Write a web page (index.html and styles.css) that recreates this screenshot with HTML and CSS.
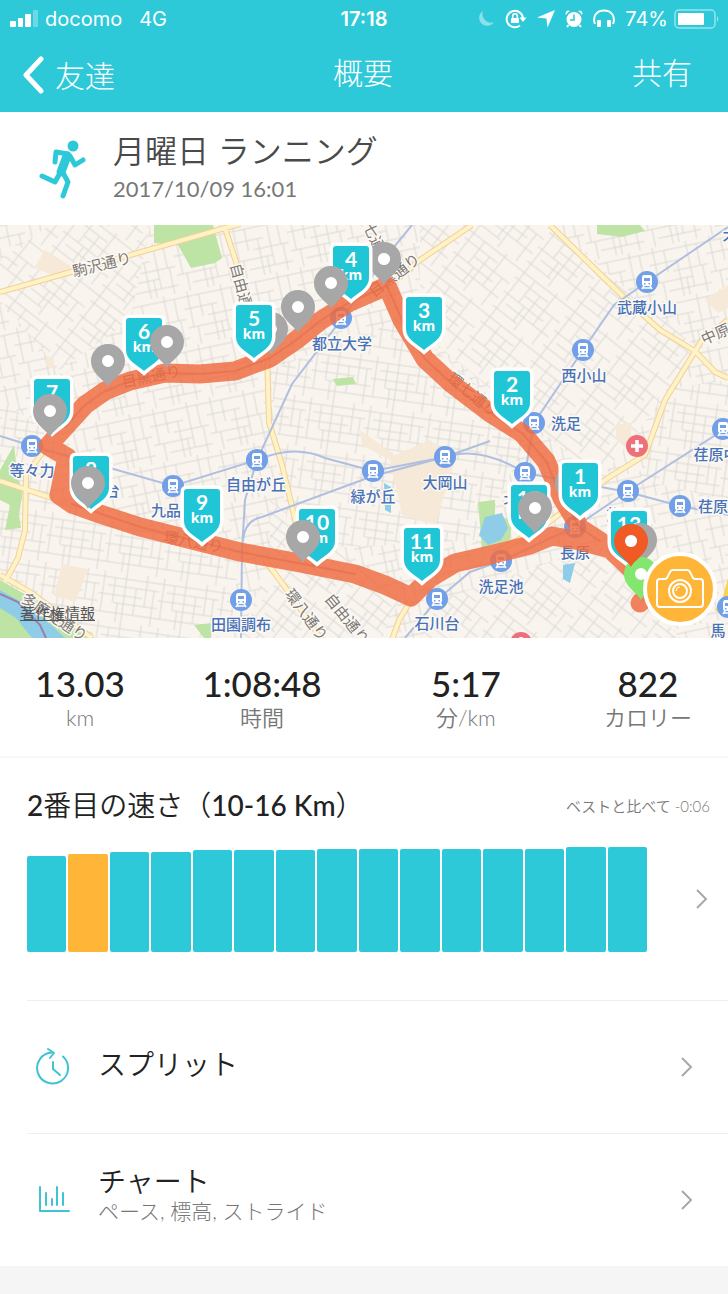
FILE: index.html
```
<!DOCTYPE html>
<html lang="ja">
<head>
  <meta charset="UTF-8">
  <meta name="viewport" content="width=device-width, initial-scale=1">
  <title>概要</title>
  <link rel="stylesheet" href="styles.css">
</head>
<body>

<header class="top">
  <div class="status-bar">
    <div class="status-left">
      <svg class="signal" width="28" height="18" viewBox="0 0 28 18" fill="#fff">
        <rect x="0" y="11" width="6" height="6" rx="1"/>
        <rect x="8" y="8" width="5" height="9" rx="1"/>
        <rect x="15" y="4" width="6" height="13" rx="1"/>
        <rect x="23" y="0" width="5" height="17" rx="1" opacity=".3"/>
      </svg>
      <span>docomo</span>
      <span class="network">4G</span>
    </div>
    <div class="clock">17:18</div>
    <div class="status-right">
      <svg width="18" height="18" viewBox="0 0 18 18"><path d="M6 1A8 8 0 1 0 17 12 8.500 8.500 0 0 1 6 1z" fill="#fff" opacity=".45"/></svg>
      <svg width="22" height="20" viewBox="0 0 22 20" fill="none" stroke="#fff" stroke-width="2">
        <path d="M15 16.500A8.200 8.200 0 1 1 18 9"/>
        <path d="M14.500 8.500h7l-3.500 4.500z" fill="#fff" stroke="none"/>
        <rect x="6" y="9" width="8" height="5" rx="1" fill="#fff" stroke="none"/>
        <path d="M7.700 9V7a2.300 2.300 0 0 1 4.600 0v2" stroke-width="1.500"/>
      </svg>
      <svg width="18" height="18" viewBox="0 0 18 18"><path d="M18 0 10.500 17.500 9.500 8.500 0 7.500z" fill="#fff"/></svg>
      <svg width="18" height="18" viewBox="0 0 18 18">
        <path d="M1 5a9 9 0 0 1 4-4L3 .5A3 3 0 0 0 1 5zM17 5a9 9 0 0 0-4-4l2-.5A3 3 0 0 1 17 5z" fill="#fff"/>
        <circle cx="9" cy="9.500" r="7.500" fill="#fff"/>
        <path d="M3.500 15 2 17M14.500 15l1.500 2" stroke="#fff" stroke-width="2"/>
        <path d="M9 4.500v5.500H5" fill="none" stroke="#2dc9d9" stroke-width="1.500"/>
      </svg>
      <svg width="22" height="19" viewBox="0 0 22 19">
        <path d="M2 15C-1 7 4 1.500 11 1.500S23 7 20 15" fill="none" stroke="#fff" stroke-width="2"/>
        <rect x="4" y="11" width="4" height="7" rx="1" fill="#fff"/>
        <rect x="14" y="11" width="4" height="7" rx="1" fill="#fff"/>
      </svg>
      <span>74%</span>
      <svg class="battery" width="46" height="20" viewBox="0 0 46 20">
        <rect x="1" y="1" width="40" height="18" rx="4" fill="none" stroke="#fff" stroke-width="1.500" opacity=".5"/>
        <rect x="4" y="4" width="26" height="12" rx="1" fill="#fff"/>
        <path d="M43 7a4 4 0 0 1 0 6z" fill="#fff" opacity=".5"/>
      </svg>
    </div>
  </div>
  <nav class="nav-bar">
    <a class="back" href="#">
      <svg width="22" height="38" viewBox="0 0 22 38"><path d="M19 3 4 19l15 16" fill="none" stroke="#fff" stroke-width="5" stroke-linecap="round" stroke-linejoin="round"/></svg>
      友達
    </a>
    <h1>概要</h1>
    <button class="share" type="button">共有</button>
  </nav>
</header>

<section class="workout">
  <svg class="runner" width="48" height="60" viewBox="0 0 48 60" fill="none" stroke="#2dc9d9" stroke-width="5" stroke-linecap="round" stroke-linejoin="round">
    <circle cx="34" cy="7" r="5.500" fill="#2dc9d9" stroke="none"/>
    <path d="M16 23 17 13 29 15"/>
    <path d="M28 17 22 33" stroke-width="9"/>
    <path d="M31 17 36 26 44 21"/>
    <path d="M23 32 29 43 24 57"/>
    <path d="M21 34 16 43 3 37"/>
  </svg>
  <div>
    <h2>月曜日 ランニング</h2>
    <p>2017/10/09 16:01</p>
  </div>
</section>

<section class="map">
  <svg class="map-canvas" viewBox="0 225 728 413" role="img" aria-label="ルート">
    <defs>
      <pattern id="streets-a" width="58" height="54" patternUnits="userSpaceOnUse" patternTransform="rotate(-12)">
        <rect width="58" height="54" fill="#f9f5ee"/>
        <path d="M0 5H58M0 17H34M22 27H58M0 36H40M14 46H58M6 0V36M17 5V27M28 17V54M40 0V46M50 5V27M34 36V54M10 36V54M52 27V54"/>
      </pattern>
      <pattern id="streets-b" width="64" height="56" patternUnits="userSpaceOnUse" patternTransform="rotate(38)">
        <rect width="64" height="56" fill="#f9f5ee"/>
        <path d="M0 4H64M0 13H42M20 22H64M0 31H50M10 40H64M0 49H30M5 0V56M19 4V31M32 13V56M44 0V40M55 22V56M26 31V49"/>
      </pattern>
      <pattern id="streets-c" width="60" height="50" patternUnits="userSpaceOnUse" patternTransform="rotate(8)">
        <rect width="60" height="50" fill="#f9f5ee"/>
        <path d="M0 6H60M8 14H60M0 23H44M16 31H60M0 41H60M4 0V41M15 6V31M26 0V50M37 14V41M47 0V31M55 14V50M20 31V50"/>
      </pattern>

      <g id="shield">
        <path d="M-15 0H15Q18 0 18 3V32C18 42 8 46 0 53C-8 46-18 42-18 32V3Q-18 0-15 0Z" fill="#20c6d6" stroke="#fff" stroke-width="7" paint-order="stroke"/>
        <text class="unit" y="34">km</text>
      </g>
      <path id="pin" d="M0 26C-3 19-17 13-17 0A17 17 0 0 1 17 0C17 13 3 19 0 26ZM-6 0A6 6 0 0 0 6 0A6 6 0 0 0-6 0Z"/>
      <g id="station">
        <circle r="11" fill="#72a0e8"/>
        <path d="M-3-7H3Q5-7 5-4V2Q5 4 3 4H-3Q-5 4-5 2V-4Q-5-7-3-7Z" fill="#fff"/>
        <path d="M-3-4H3V-1H-3ZM-3 1H-1.500V2.500H-3ZM1.500 1H3V2.500H1.500Z" fill="#72a0e8"/>
        <path d="M-3 4-5 7M3 4 5 7M-4 6H4" stroke="#fff" stroke-width="1.500"/>
      </g>
      <g id="hospital">
        <circle r="11" fill="#ee7079"/>
        <path d="M0-6V6M-6 0H6" stroke="#fff" stroke-width="3.500"/>
      </g>
    </defs>

    <!-- ground -->
    <rect x="0" y="225" width="728" height="413" fill="#f9f5ee"/>
    <g>
      <rect x="0" y="225" width="728" height="413" fill="url(#streets-a)"/>
      <path d="M50 225H150L130 320 60 370 0 300V260ZM270 500 400 600 380 638H240L270 560ZM420 225 550 225 700 350 600 480 420 330ZM440 600 600 545 680 638H420Z" fill="url(#streets-b)"/>
      <path d="M270 370 400 320 530 430 480 540 290 550ZM0 400 60 440 50 500 240 550 230 638H90L0 570ZM660 390 728 380V500L640 480Z" fill="url(#streets-c)"/>
    </g>
    <g fill="#f7e9d8">
      <path d="M45 250 74 268 65 280 34 268ZM360 430 395 455 430 440 455 460 435 525 402 515 390 460 362 445ZM705 300 728 285V308L718 313ZM62 564 88 569 75 602 54 596ZM615 425 632 422 630 446 617 441ZM46 355 54 359V368L46 366Z"/>
    </g>
    <g fill="#bde4a4">
      <path d="M154 225H213L222 258 215 263 191 268 178 245 154 243ZM597 225H640L645 231 622 237 597 234ZM333 379 353 377 356 384 337 386ZM14 445 18 480 23 490 19 515 21 528 5 530 10 505 0 500V470ZM0 580 30 597 60 618 95 638H0ZM194 625 212 623 211 638H204ZM478 502 495 500V515L512 520 510 540 482 548Z"/>
    </g>
    <g fill="#8fcce8">
      <path d="M0 590 25 604 48 622 65 638H32L16 618 0 608ZM485 517 502 513 508 528 501 540 488 545 479 535ZM563 565 575 563 570 583 563 579ZM384 483 391 487V513L385 510Z"/>
    </g>
    <path d="M0 594 18 602 40 625 46 638" fill="none" stroke="#9b7fa5" stroke-width="2"/>
    <path d="M728 578 722 600 715 610 728 616Z" fill="#f8d64b"/>

    <g class="road-edge">
      <path id="roads" d="M0 292 85 268 225 228 240 224M225 228 237 265 267 350 269 422 282 465 300 540M550 225 600 274 630 303 660 330 695 351 715 372 728 378M728 320 702 340 665 400 645 455 608 478 545 525 500 550M472 225 420 260 385 290M0 481 52 498M48 445 26 475 25 530 18 558 5 582M0 575 30 592 92 638M265 560 290 594 322 640M411 600 399 620 392 640"/>
    </g>
    <use href="#roads" class="road-fill"/>

    <g class="rail">
      <path d="M728 227 647 282 614 305 583 350 534 423 525 473"/>
      <path d="M412 225 385 258 341 320 292 384 257 460 245 500 242 550 241 638"/>
      <path d="M0 436 32 446 110 468 173 486 257 460Q295 444 325 458L373 471 445 457Q480 445 525 473L628 492 680 506 728 515"/>
      <path d="M243 540Q245 520 262 517L373 476 445 457 490 441"/>
      <path d="M405 638 437 600 470 572 501 561 575 527 628 491 728 427"/>
    </g>

    <g class="street-name">
      <text transform="translate(74 277) rotate(-14)">駒沢通り</text>
      <text transform="translate(230 265) rotate(75)">自由通</text>
      <text transform="translate(363 226) rotate(65)">七通</text>
      <text transform="translate(374 298) rotate(-38)">目黒通り</text>
      <text transform="translate(123 388) rotate(-12)">目黒通り</text>
      <text transform="translate(446 380) rotate(39)">環七通り</text>
      <text transform="translate(163 542) rotate(10)">環八通り</text>
      <text transform="translate(284 594) rotate(53)">環八通り</text>
      <text transform="translate(324 599) rotate(51)">自由通り</text>
      <text transform="translate(20 601) rotate(33)">多摩堤通り</text>
      <text transform="translate(704 345) rotate(-24)">中原</text>
    </g>

    <g>
      <use href="#station" x="647" y="282"/>
      <use href="#station" x="583" y="350"/>
      <use href="#station" x="534" y="423"/>
      <use href="#station" x="341" y="318"/>
      <use href="#station" x="257" y="460"/>
      <use href="#station" x="173" y="486"/>
      <use href="#station" x="32" y="446"/>
      <use href="#station" x="373" y="471"/>
      <use href="#station" x="445" y="457"/>
      <use href="#station" x="525" y="473"/>
      <use href="#station" x="575" y="527"/>
      <use href="#station" x="628" y="491"/>
      <use href="#station" x="680" y="506"/>
      <use href="#station" x="501" y="561"/>
      <use href="#station" x="437" y="599"/>
      <use href="#station" x="241" y="600"/>
      <use href="#station" x="723" y="429"/>
      <use href="#station" x="728" y="607"/>
      <use href="#hospital" x="637" y="446"/>
      <use href="#hospital" x="521" y="643"/>
    </g>

    <g class="place">
      <text x="647" y="313">武蔵小山</text>
      <text x="584" y="381">西小山</text>
      <text x="566" y="429">洗足</text>
      <text x="342" y="349">都立大学</text>
      <text x="32" y="476">等々力</text>
      <text x="112" y="496">台</text>
      <text x="166" y="516">九品</text>
      <text x="256" y="490">自由が丘</text>
      <text x="373" y="502">緑が丘</text>
      <text x="445" y="488">大岡山</text>
      <text x="241" y="630">田園調布</text>
      <text x="437" y="629">石川台</text>
      <text x="501" y="592">洗足池</text>
      <text x="575" y="558">長原</text>
      <text x="716" y="460">荏原中</text>
      <text x="713" y="512">荏原</text>
      <text x="718" y="636">馬</text>
      <text x="511" y="505">北</text>
      <text x="614" y="520">旗</text>
      <text x="730" y="244">不</text>
    </g>

    <!-- run -->
    <path class="route" d="M640 603 651 592 636 574 618 556 600 541 580 528 562 498 546 461 522 433 490 413 452 384 425 359 402 320 387 286 350 302 320 321 295 341 270 358 235 371 200 374 165 373 130 381 105 391 85 405 65 427 48 446 67 457 59 495 72 504 100 514 140 527 200 542 240 552 300 563 355 574 385 585 411 597 430 578 455 563 490 555 530 545 552 536 580 541 610 549 628 566"/>
    <path class="route-lane" d="M600 541 580 528 562 498 546 461 522 433 490 413 452 384 425 359 402 320 387 286 350 302 320 321 295 341 270 358 235 371 200 374 165 373 130 381 105 391 85 405 65 427M72 504 140 527 240 552 355 574"/>

    <g class="pins">
      <use href="#pin" x="271" y="329"/>
      <use href="#pin" x="572" y="483"/>
      <use href="#pin" x="384" y="259"/>
    </g>

    <g class="shields">
      <g transform="translate(351 246)"><use href="#shield"/><text y="21">4</text></g>
      <g transform="translate(424 297)"><use href="#shield"/><text y="21">3</text></g>
      <g transform="translate(254 305)"><use href="#shield"/><text y="21">5</text></g>
      <g transform="translate(144 318)"><use href="#shield"/><text y="21">6</text></g>
      <g transform="translate(52 379)"><use href="#shield"/><text y="21">7</text></g>
      <g transform="translate(512 371)"><use href="#shield"/><text y="21">2</text></g>
      <g transform="translate(91 456)"><use href="#shield"/><text y="21">8</text></g>
      <g transform="translate(202 489)"><use href="#shield"/><text y="21">9</text></g>
      <g transform="translate(317 509)"><use href="#shield"/><text y="21">10</text></g>
      <g transform="translate(422 528)"><use href="#shield"/><text y="21">11</text></g>
      <g transform="translate(580 463)"><use href="#shield"/><text y="21">1</text></g>
      <g transform="translate(529 485)"><use href="#shield"/><text y="21">12</text></g>
      <g transform="translate(629 511)"><use href="#shield"/><text y="21">13</text></g>
    </g>

    <g class="pin-holes">
      <circle cx="108" cy="361" r="7"/>
      <circle cx="167" cy="342" r="7"/>
      <circle cx="50" cy="411" r="7"/>
      <circle cx="88" cy="483" r="7"/>
      <circle cx="331" cy="283" r="7"/>
      <circle cx="384" cy="259" r="6"/>
      <circle cx="298" cy="307" r="7"/>
      <circle cx="303" cy="537" r="7"/>
      <circle cx="535" cy="508" r="7"/>
      <circle cx="641" cy="574" r="7"/>
    </g>
    <g class="pins">
      <use href="#pin" x="108" y="361"/>
      <use href="#pin" x="167" y="342"/>
      <use href="#pin" x="50" y="411"/>
      <use href="#pin" x="88" y="483"/>
      <use href="#pin" x="331" y="283"/>
      <use href="#pin" x="298" y="307"/>
      <use href="#pin" x="303" y="537"/>
      <use href="#pin" x="535" y="508"/>
      <use href="#pin" x="640" y="540"/>
      <use href="#pin" x="641" y="574" class="pin-start"/>
      <use href="#pin" x="631" y="541" class="pin-end"/>
      <circle cx="631" cy="541" r="6" fill="#fff"/>
    </g>
  </svg>
  <a class="legal" href="#">著作権情報</a>
  <button class="camera" type="button" aria-label="写真を追加">
    <svg width="50" height="42" viewBox="0 0 50 42" fill="none" stroke="#fff" stroke-width="2" stroke-linejoin="round">
      <path d="M5 11H10Q12 11 13 8L15 4Q16 2 18 2H32Q34 2 35 4L37 8Q38 11 40 11H45Q48 11 48 14V36Q48 39 45 39H5Q2 39 2 36V14Q2 11 5 11Z"/>
      <circle cx="25" cy="23" r="11"/>
      <circle cx="25" cy="23" r="7"/>
      <path d="M21 23q0-4 4-4" stroke-width="1"/>
    </svg>
  </button>
</section>

<dl class="stats">
  <div><dd>13.03</dd><dt>km</dt></div>
  <div><dd>1:08:48</dd><dt>時間</dt></div>
  <div><dd>5:17</dd><dt>分/km</dt></div>
  <div><dd>822</dd><dt>カロリー</dt></div>
</dl>

<section class="ranking">
  <div class="ranking-head">
    <h3><b>2</b>番目の速さ（<b>10-16 Km</b>）</h3>
    <span>ベストと比べて -0:06</span>
  </div>
  <a class="ranking-body" href="#" aria-label="速さの比較">
    <span class="bars">
      <i style="height:96px"></i>
      <i class="current" style="height:98px"></i>
      <i style="height:100px"></i>
      <i style="height:100px"></i>
      <i style="height:102px"></i>
      <i style="height:102px"></i>
      <i style="height:102px"></i>
      <i style="height:103px"></i>
      <i style="height:103px"></i>
      <i style="height:103px"></i>
      <i style="height:103px"></i>
      <i style="height:103px"></i>
      <i style="height:103px"></i>
      <i style="height:105px"></i>
      <i style="height:105px"></i>
    </span>
    <svg class="chevron" width="14" height="22" viewBox="0 0 14 22"><path d="M2 2 11 11 2 20"/></svg>
  </a>
</section>

<nav class="menu">
  <a href="#">
    <svg class="menu-icon" width="36" height="40" viewBox="0 0 36 40">
      <path d="M28 9.500A15.500 15.500 0 1 1 17 5.500"/>
      <path d="M13 2 19 6 15 11M18 15V22L25 28"/>
    </svg>
    <span class="menu-text"><strong>スプリット</strong></span>
    <svg class="chevron" width="14" height="22" viewBox="0 0 14 22"><path d="M2 2 11 11 2 20"/></svg>
  </a>
  <a href="#">
    <svg class="menu-icon" width="36" height="40" viewBox="0 0 36 40">
      <path d="M5 7V31H34M11 13V25M17 19V25M22 7V25M28 13V25"/>
    </svg>
    <span class="menu-text"><strong>チャート</strong><small>ペース, 標高, ストライド</small></span>
    <svg class="chevron" width="14" height="22" viewBox="0 0 14 22"><path d="M2 2 11 11 2 20"/></svg>
  </a>
</nav>

</body>
</html>
```
FILE: styles.css
```
* {
  box-sizing: border-box;
}
body {
  margin: 0;
  background: #f5f5f5;
  color: #222;
  font-family: Lato, "Noto Sans CJK JP", sans-serif;
}
h1, h2, h3, p, dl, dd {
  margin: 0;
  font-weight: 300;
}
a {
  color: inherit;
  text-decoration: none;
}
button {
  padding: 0;
  border: none;
  background: none;
  color: inherit;
  font: inherit;
  cursor: pointer;
}

/* header */
.top {
  height: 112px;
  background: #2dc9d9;
  color: #fff;
}
.status-bar {
  display: grid;
  grid-template-columns: 1fr auto 1fr;
  align-items: center;
  height: 37px;
  padding: 0 10px;
  font: 20px/24px Inter, sans-serif;
}
.status-left, .status-right {
  display: flex;
  align-items: center;
}
.status-left {
  gap: 7px;
}
.network {
  margin-left: 10px;
}
.clock {
  font-weight: 600;
}
.status-right {
  justify-content: flex-end;
  gap: 10px;
}
.status-right .battery {
  margin-left: -4px;
  margin-right: -2px;
}
.nav-bar {
  display: grid;
  grid-template-columns: 1fr auto 1fr;
  align-items: center;
  height: 75px;
  padding: 0 36px 0 22px;
  font-size: 30px;
  font-weight: 300;
  line-height: 38px;
}
.nav-bar h1 {
  margin-left: 12px;
  font-size: 30px;
}
.nav-bar h1, .share {
  padding-bottom: 6px;
}
.back {
  display: flex;
  align-items: center;
  gap: 11px;
  height: 38px;
  line-height: 32px;
}
.share {
  justify-self: end;
}

.workout {
  display: flex;
  align-items: center;
  gap: 26px;
  height: 113px;
  padding-left: 39px;
  background: #fff;
}
.workout h2 {
  color: #4a4a4a;
  font-size: 32px;
  font-weight: 350;
  line-height: 40px;
}
.workout p {
  color: #777;
  font-size: 22px;
  font-weight: 400;
  line-height: 36px;
}

/* map */
.map {
  position: relative;
}
.map-canvas {
  display: block;
  width: 100%;
}
pattern path {
  fill: none;
  stroke: #dcdad6;
}
.road-edge, .road-fill {
  fill: none;
}
.road-edge {
  stroke: #f0d09a;
  stroke-width: 6;
}
.road-fill {
  stroke: #fff2c4;
  stroke-width: 4;
}
.rail {
  fill: none;
  stroke: #b0bfe0;
  stroke-width: 2;
}
.street-name, .place {
  stroke: #fcf9f4;
  stroke-width: 3;
  stroke-linejoin: round;
  paint-order: stroke;
  font-family: "Noto Sans CJK JP", sans-serif;
}
.street-name {
  fill: #7c7875;
  font-size: 15px;
}
.place {
  fill: #4872b8;
  font-size: 15px;
  font-weight: 500;
  text-anchor: middle;
}
.route, .route-lane {
  fill: none;
  stroke-linejoin: round;
  stroke-linecap: round;
}
.route {
  stroke: #f06d42;
  stroke-width: 19;
  opacity: .84;
}
.route-lane {
  stroke: #dc6540;
  stroke-width: 2;
  opacity: .4;
}
.shields text {
  fill: #fff;
  font-size: 21px;
  font-weight: 700;
  text-anchor: middle;
}
.unit {
  fill: #fff;
  font-family: "Noto Sans", sans-serif;
  font-size: 14px;
  font-weight: 700;
  text-anchor: middle;
}
.pins {
  fill: #a7a7a7;
}
.pin-holes {
  fill: #fff;
}
.pin-start {
  fill: #82e66f;
}
.pin-end {
  fill: #f15a24;
}
.legal {
  position: absolute;
  left: 20px;
  bottom: 15px;
  color: #555;
  font-size: 15px;
  line-height: 20px;
  text-decoration: underline;
}
.camera {
  position: absolute;
  right: 11px;
  bottom: 12px;
  display: flex;
  align-items: center;
  justify-content: center;
  width: 74px;
  height: 74px;
  border: 4px solid #fff;
  border-radius: 50%;
  background: #ffb638;
}

/* totals */
.stats {
  display: grid;
  grid-template-columns: 11fr 14fr 14fr 11fr;
  height: 120px;
  padding-top: 25px;
  background: #fff;
  border-bottom: 2px solid #f7f7f7;
  text-align: center;
}
.stats dd {
  font-size: 35px;
  font-weight: 500;
  line-height: 40px;
}
.stats dt {
  color: #777;
  font-size: 22px;
  font-weight: 350;
  line-height: 30px;
}

.ranking {
  padding: 26px 0 48px 27px;
  background: #fff;
}
.ranking-head {
  display: flex;
  align-items: center;
  justify-content: space-between;
  height: 42px;
  padding-right: 18px;
}
.ranking-head h3 {
  font-size: 28px;
  font-weight: 350;
  line-height: 40px;
}
.ranking-head b {
  font-weight: 500;
}
.ranking-head span {
  color: #777;
  font-size: 15px;
  font-weight: 350;
}
.ranking-body {
  display: flex;
  align-items: flex-end;
  justify-content: space-between;
  height: 126px;
  padding-right: 19px;
}
.ranking-body .chevron {
  margin-bottom: 42px;
}
.bars {
  display: flex;
  align-items: flex-end;
  gap: 2px;
  flex: 1;
  margin-right: 48px;
}
.bars i {
  flex: 1;
  border-radius: 2px;
  background: #2dc9d9;
}
.bars .current {
  background: #ffb638;
}
.chevron {
  flex: none;
  fill: none;
  stroke: #a8a8a8;
  stroke-width: 2;
}

/* links */
.menu {
  padding-left: 27px;
  background: #fff;
}
.menu a {
  display: flex;
  align-items: center;
  height: 133px;
  padding: 0 34px 0 8px;
  border-top: 1px solid #eee;
}
.menu-icon {
  flex: none;
  fill: none;
  stroke: #3fc3d2;
  stroke-width: 2;
  stroke-linecap: round;
  stroke-linejoin: round;
}
.menu-text {
  display: flex;
  flex-direction: column;
  flex: 1;
  margin-left: 27px;
  padding-bottom: 6px;
}
.menu-text strong {
  font-size: 28px;
  font-weight: 350;
  line-height: 36px;
}
.menu-text small {
  margin-bottom: 8px;
  color: #777;
  font-size: 21px;
  font-weight: 300;
  line-height: 24px;
}
```
